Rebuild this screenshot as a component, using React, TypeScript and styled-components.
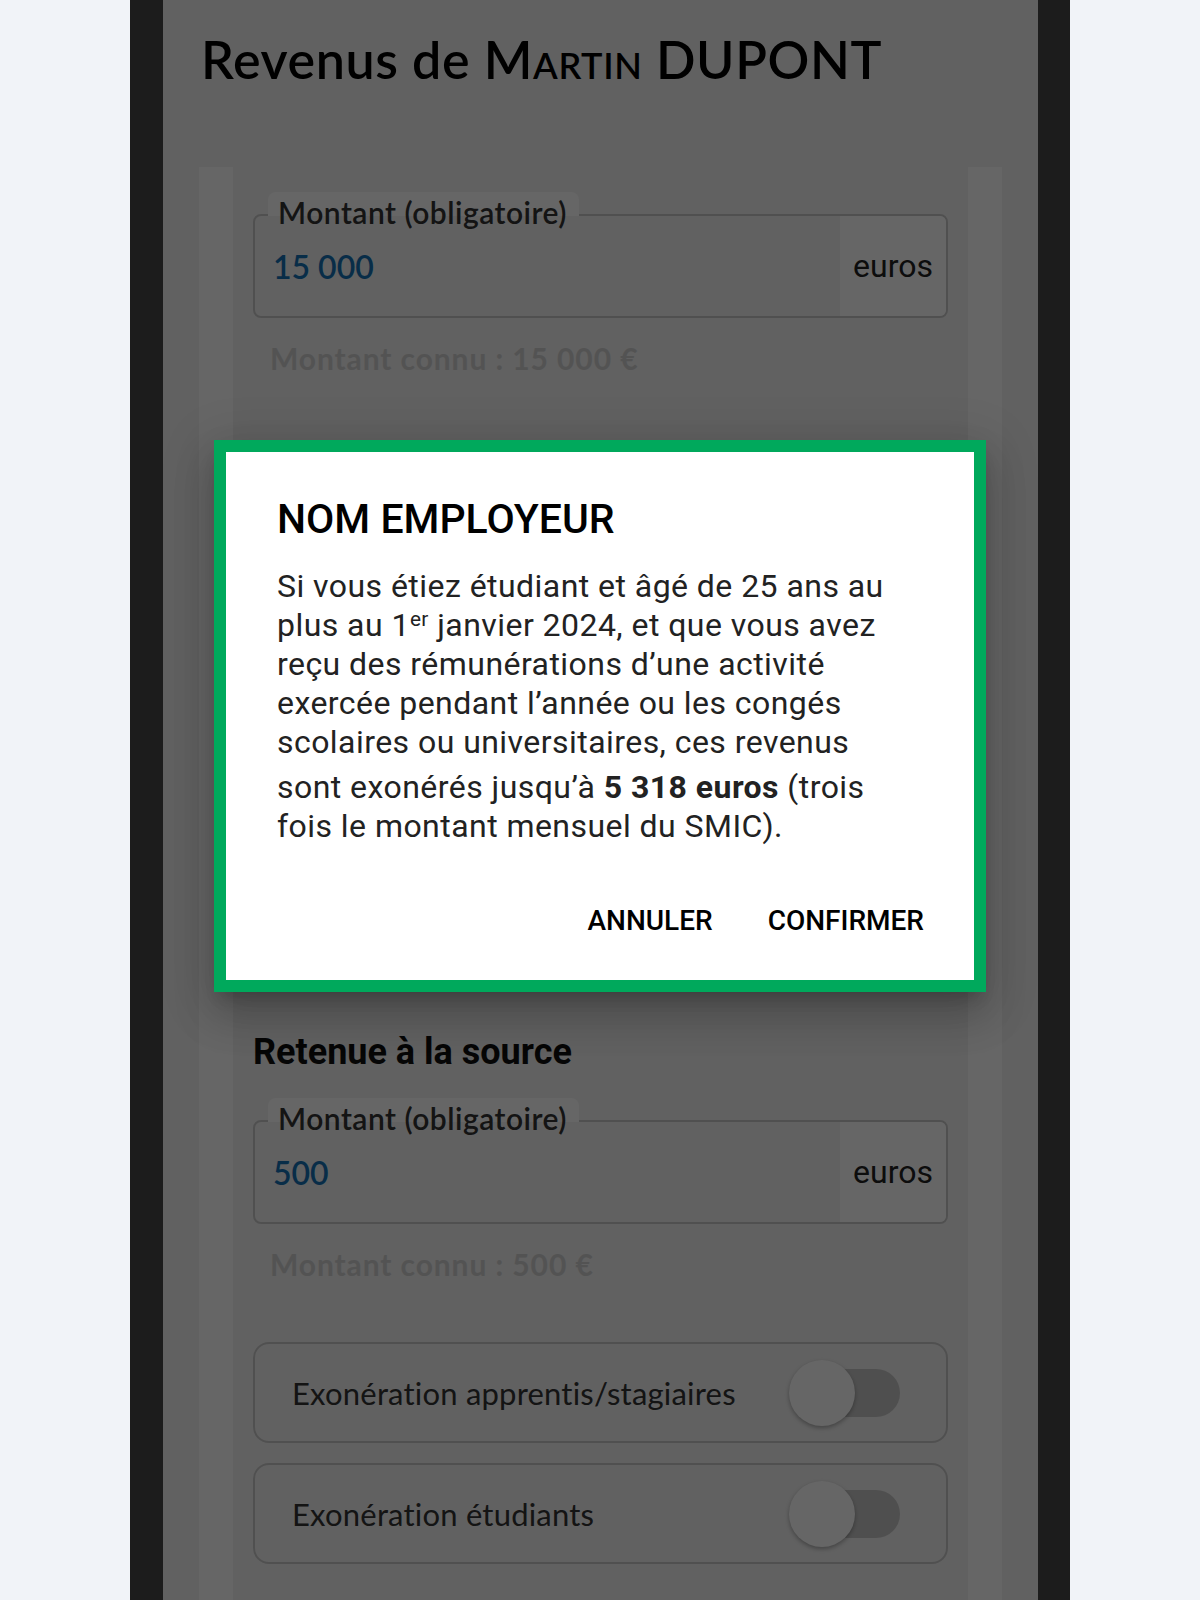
import React from 'react';
import styled, {createGlobalStyle} from 'styled-components';

const SANS = `Lato, "Noto Sans", sans-serif`;
const ROBOTO = `Roboto, "Liberation Sans", sans-serif`;
const GREEN = '#00a95c';

const GlobalStyle = createGlobalStyle`
    html, body {
        margin: 0;
        padding: 0;
        background: #f1f3f8;
        overflow: hidden;
    }
    * {
        box-sizing: border-box;
    }
`;

export default function App() {
    return (
        <>
            <GlobalStyle/>
            <Phone>
                <PageTitle>Revenus de <SmallCaps>Martin</SmallCaps> DUPONT</PageTitle>
                <Card>
                    <Group>
                        <AmountField value="15 000" known="15 000"/>
                        <SectionTitle>Retenue à la source</SectionTitle>
                        <AmountField value="500" known="500"/>
                        <ToggleRow label="Exonération apprentis/stagiaires"/>
                        <ToggleRow label="Exonération étudiants"/>
                    </Group>
                </Card>

                <Overlay/>
                <Dialog role="dialog">
                    <DialogTitle>NOM EMPLOYEUR</DialogTitle>
                    <DialogText>
                        Si vous étiez étudiant et âgé de 25 ans au plus au 1<sup>er</sup> janvier 2024, et que vous
                        avez reçu des rémunérations d’une activité exercée pendant l’année ou les congés scolaires
                        ou universitaires, ces revenus sont exonérés jusqu’à <strong>5 318 euros</strong> (trois
                        fois le montant mensuel du SMIC).
                    </DialogText>
                    <Actions>
                        <TextButton>ANNULER</TextButton>
                        <TextButton>CONFIRMER</TextButton>
                    </Actions>
                </Dialog>
            </Phone>
        </>
    );
}

function AmountField({value, known}: {value: string; known: string}) {
    return (
        <>
            <FieldWrap>
                <FieldBox>
                    <FieldLabel>Montant (obligatoire)</FieldLabel>
                    <FieldValue>{value}</FieldValue>
                    <Unit>euros</Unit>
                </FieldBox>
            </FieldWrap>
            <Helper>Montant connu : {known} €</Helper>
        </>
    );
}

function ToggleRow({label}: {label: string}) {
    return (
        <Row>
            <RowLabel>{label}</RowLabel>
            <Track>
                <Thumb/>
            </Track>
        </Row>
    );
}

const Phone = styled.div`
    position: relative;
    width: 940px;
    height: 1600px;
    margin: 0 auto;
    border-left: 33px solid #1c1c1c;
    border-right: 32px solid #1c1c1c;
    background: #f2f2f2;
    overflow: hidden;
`

const PageTitle = styled.h1`
    margin: 29px 0 78px 38px;
    font-family: ${SANS};
    font-weight: 600;
    font-size: 52px;
    line-height: 60px;
    letter-spacing: 0.6px;
    color: #000;
`

const SmallCaps = styled.span`
    font-variant: small-caps;
`

const Card = styled.section`
    margin: 0 36px;
    padding: 0 34px;
    background: #fff;
    height: 1433px;
`

const Group = styled.div`
    height: 100%;
    padding: 25px 20px 0;
    background: #f2f2f2;
`

const FieldWrap = styled.div`
    padding-top: 22px;
`

const FieldBox = styled.div`
    position: relative;
    display: flex;
    height: 104px;
    border: 2px solid #c9c9c9;
    border-radius: 8px;
`

const FieldLabel = styled.span`
    position: absolute;
    top: -24px;
    left: 13px;
    padding: 0 12px 0 10px;
    border-radius: 8px 8px 0 0;
    background: linear-gradient(#fff 0 60%, transparent 60%);
    font-family: ${SANS};
    font-weight: 600;
    font-size: 30px;
    line-height: 40px;
    letter-spacing: 0.5px;
    color: #333;
`

const FieldValue = styled.div`
    flex: 1;
    display: flex;
    align-items: center;
    padding-left: 18px;
    font-family: ${SANS};
    font-weight: 600;
    font-size: 32px;
    color: #1670b3;
`

const Unit = styled.div`
    display: flex;
    align-items: center;
    justify-content: flex-end;
    width: 106px;
    padding-right: 13px;
    background: #fff;
    border-radius: 0 6px 6px 0;
    font-family: ${ROBOTO};
    font-size: 32px;
    color: #222;
`

const Helper = styled.p`
    margin: 22px 0 0;
    padding-left: 17px;
    font-family: ${SANS};
    font-weight: 700;
    font-size: 30px;
    line-height: 36px;
    letter-spacing: 0.9px;
    color: #d0d0d0;
`

const SectionTitle = styled.h2`
    margin: 655px 0 25px;
    font-family: ${ROBOTO};
    font-weight: 700;
    font-size: 36px;
    line-height: 42px;
    color: #111;
`

const Row = styled.div`
    display: flex;
    align-items: center;
    justify-content: space-between;
    height: 101px;
    margin-top: 20px;
    padding: 0 46px 0 37px;
    border: 2px solid #c9c9c9;
    border-radius: 16px;

    ${Helper} + & {
        margin-top: 60px;
    }
`

const RowLabel = styled.span`
    font-family: ${SANS};
    font-size: 31px;
    letter-spacing: 0.2px;
    color: #333;
`

const Track = styled.span`
    position: relative;
    width: 94px;
    height: 48px;
    border-radius: 24px;
    background: #c6c6c6;
`

const Thumb = styled.span`
    position: absolute;
    top: -9px;
    left: -17px;
    width: 66px;
    height: 66px;
    border-radius: 50%;
    background: #fff;
    box-shadow: 0 2px 4px rgba(0, 0, 0, 0.3);
`

const Overlay = styled.div`
    position: absolute;
    inset: 0;
    background: rgba(0, 0, 0, 0.6);
`

const Dialog = styled.div`
    position: absolute;
    top: 440px;
    left: 51px;
    width: 772px;
    padding: 43px 42px 41px 51px;
    border: 12px solid ${GREEN};
    background: #fff;
    box-shadow: 0 11px 15px -7px rgba(0, 0, 0, 0.2), 0 24px 38px 3px rgba(0, 0, 0, 0.14), 0 9px 46px 8px rgba(0, 0, 0, 0.12);
`

const DialogTitle = styled.h2`
    margin: 0 0 24px;
    font-family: ${ROBOTO};
    font-weight: 500;
    font-size: 41px;
    line-height: 48px;
    color: #000;
`

const DialogText = styled.p`
    max-width: 630px;
    margin: 0;
    font-family: ${ROBOTO};
    font-size: 32px;
    line-height: 39px;
    letter-spacing: 0.45px;
    color: #222;

    sup {
        font-size: 0.65em;
        line-height: 0;
        vertical-align: 10px;
    }

    strong {
        display: inline-block;
        padding-top: 6px;
        font-weight: 700;
    }
`

const Actions = styled.div`
    display: flex;
    justify-content: flex-end;
    gap: 39px;
    margin-top: 57px;
`

const TextButton = styled.button`
    padding: 0 8px;
    border: 0;
    background: none;
    font-family: ${ROBOTO};
    font-weight: 500;
    font-size: 28px;
    line-height: 36px;
    color: #000;
    cursor: pointer;
`
